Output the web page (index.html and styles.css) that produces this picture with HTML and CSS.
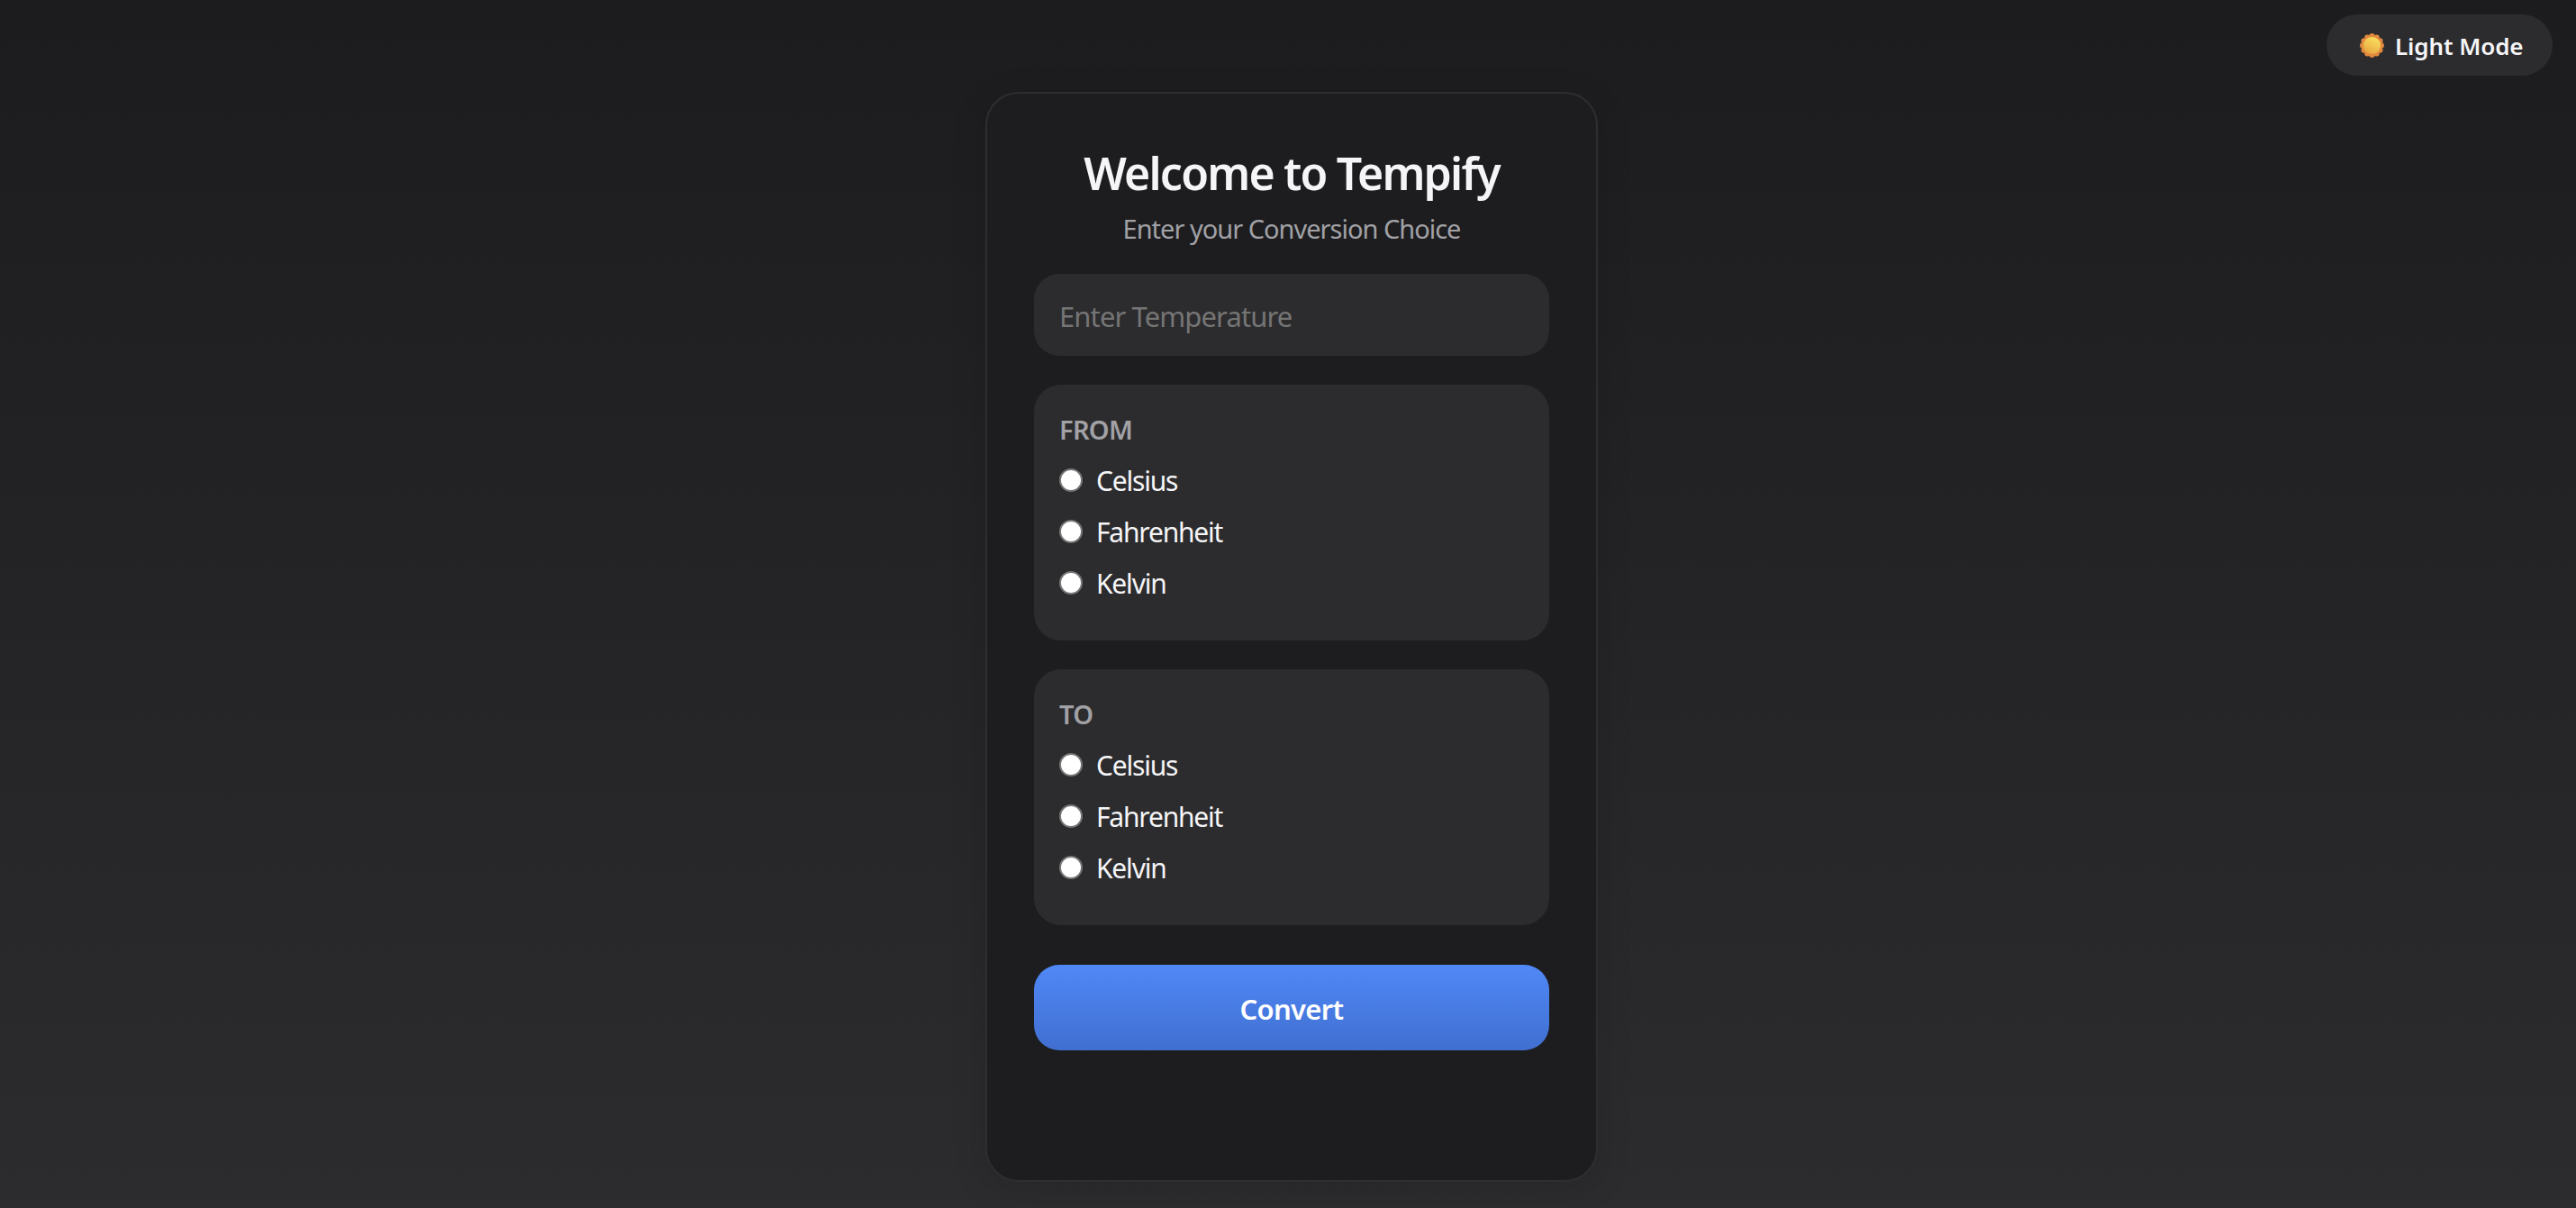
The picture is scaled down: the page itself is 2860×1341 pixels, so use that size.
FILE: index.html
```html
<!DOCTYPE html>
<html lang="en">

<head>
    <meta charset="utf-8">
    <title>Tempify</title>
    <link rel="stylesheet" href="styles.css">
</head>

<body>
    <button class="theme-toggle" type="button">
        <svg class="sun-icon" viewBox="0 0 27 27" aria-hidden="true">
            <defs>
                <linearGradient id="sunFill" x1="0.7" y1="0.1" x2="0.3" y2="0.95">
                    <stop offset="0" stop-color="#f8dc5c"/>
                    <stop offset="1" stop-color="#e8a843"/>
                </linearGradient>
            </defs>
            <g fill="#e38a3e">
                <circle cx="13.5" cy="3.3" r="3.2"/>
                <circle cx="18.6" cy="4.7" r="3.2"/>
                <circle cx="22.3" cy="8.4" r="3.2"/>
                <circle cx="23.7" cy="13.5" r="3.2"/>
                <circle cx="22.3" cy="18.6" r="3.2"/>
                <circle cx="18.6" cy="22.3" r="3.2"/>
                <circle cx="13.5" cy="23.7" r="3.2"/>
                <circle cx="8.4" cy="22.3" r="3.2"/>
                <circle cx="4.7" cy="18.6" r="3.2"/>
                <circle cx="3.3" cy="13.5" r="3.2"/>
                <circle cx="4.7" cy="8.4" r="3.2"/>
                <circle cx="8.4" cy="4.7" r="3.2"/>
                <circle cx="13.5" cy="13.5" r="10"/>
            </g>
            <circle cx="13.5" cy="13.5" r="9.6" fill="url(#sunFill)"/>
        </svg>
        Light Mode
    </button>

    <main class="card">
        <h1>Welcome to Tempify</h1>
        <p class="subtitle">Enter your Conversion Choice</p>

        <form class="converter">
            <input class="temp-input" type="number" placeholder="Enter Temperature">

            <fieldset class="unit-group">
                <legend>FROM</legend>
                <label><input type="radio" name="from" value="c"> Celsius</label>
                <label><input type="radio" name="from" value="f"> Fahrenheit</label>
                <label><input type="radio" name="from" value="k"> Kelvin</label>
            </fieldset>

            <fieldset class="unit-group">
                <legend>TO</legend>
                <label><input type="radio" name="to" value="c"> Celsius</label>
                <label><input type="radio" name="to" value="f"> Fahrenheit</label>
                <label><input type="radio" name="to" value="k"> Kelvin</label>
            </fieldset>

            <button class="convert-btn" type="button">Convert</button>
        </form>
    </main>
</body>

</html>
```

FILE: styles.css
```css
* {
    box-sizing: border-box;
}

body {
    margin: 0;
    height: 1341px;
    padding: 102px 0 0 8px;
    display: flex;
    justify-content: center;
    align-items: flex-start;
    overflow: hidden;
    background: linear-gradient(180deg, #1c1c1e 0%, #2c2c2e 100%);
    color: #f5f5f7;
    font-family: "Noto Sans", sans-serif;
}

.theme-toggle {
    position: absolute;
    top: 16px;
    right: 26px;
    width: 251px;
    height: 68px;
    border: none;
    border-radius: 34px;
    padding: 1px 0 0 37px;
    display: flex;
    align-items: center;
    gap: 12px;
    background-color: #2c2c2e;
    color: #f5f5f7;
    font-family: inherit;
    font-size: 26px;
    font-weight: 600;
    letter-spacing: -0.1px;
}

.sun-icon {
    width: 27px;
    height: 27px;
}

.card {
    width: 680px;
    height: 1210px;
    padding: 53px 52px 0;
    border: 2px solid #2e2e30;
    border-radius: 37px;
    background-color: #1d1d1f;
    box-shadow: 0 8px 40px rgba(0, 0, 0, 0.12);
    text-align: center;
}

h1 {
    margin: 0;
    font-size: 50px;
    line-height: 70px;
    font-weight: 600;
    letter-spacing: -1.8px;
}

.subtitle {
    margin: 7px 0 0;
    font-size: 29px;
    line-height: 40px;
    color: #a1a1a6;
    letter-spacing: -1px;
}

.converter {
    margin-top: 30px;
    text-align: left;
}

.temp-input {
    display: block;
    width: 100%;
    height: 91px;
    border: none;
    border-radius: 28px;
    padding: 3px 28px 0;
    background-color: #2c2c2e;
    color: #f5f5f7;
    font-family: inherit;
    font-size: 31px;
    letter-spacing: -0.9px;
}

.temp-input::placeholder {
    color: #757575;
}

.unit-group {
    margin: 32px 0 0;
    padding: 28px 28px 0;
    height: 284px;
    border: none;
    border-radius: 30px;
    background-color: #2c2c2e;
    display: block;
}

.unit-group legend {
    float: left;
    width: 100%;
    padding: 0;
    margin-bottom: 6px;
    font-size: 29px;
    line-height: 44px;
    font-weight: 600;
    color: #a1a1a6;
    letter-spacing: -0.7px;
}

.unit-group label {
    clear: both;
    display: flex;
    align-items: center;
    gap: 15px;
    height: 57px;
    font-size: 30px;
    letter-spacing: -1.2px;
}

.unit-group input {
    appearance: none;
    flex: none;
    width: 26px;
    height: 26px;
    margin: 0 0 2px;
    border: 2px solid #767676;
    border-radius: 50%;
    background-color: #fff;
}

.convert-btn {
    display: block;
    width: 100%;
    height: 95px;
    margin-top: 44px;
    padding: 2px 0 0;
    border: none;
    border-radius: 28px;
    background: linear-gradient(180deg, #5088f7 0%, #406fd0 100%);
    color: #fff;
    font-family: inherit;
    font-size: 31px;
    font-weight: 600;
    letter-spacing: -0.7px;
}
```
